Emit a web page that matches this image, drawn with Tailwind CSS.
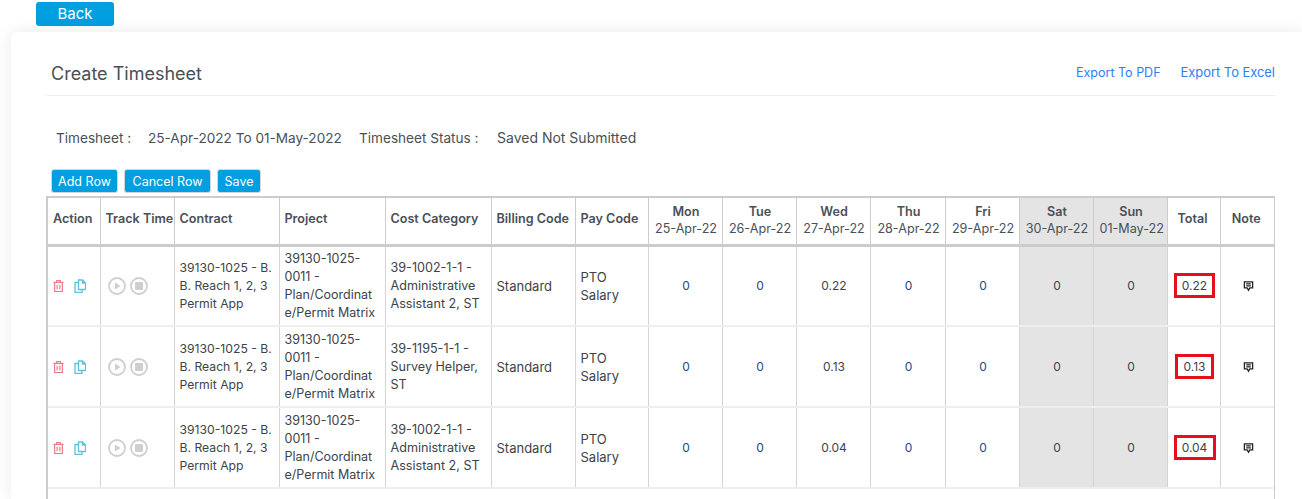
<!DOCTYPE html>
<html lang="en">
<head>
    <meta charset="UTF-8">
    <title>Create Timesheet</title>
    <script src="https://cdn.jsdelivr.net/npm/@tailwindcss/browser@4"></script>
</head>
<body class="bg-white h-[499px] overflow-hidden font-['Inter','Noto_Sans',sans-serif] text-[#495057]">
    <div class="pl-9 pt-[2px] h-[32px]">
        <button class="block w-[78px] h-[24px] bg-[#009fdf] rounded-[3px] text-white text-[15px]">Back</button>
    </div>

    <div class="ml-[11px] h-[467px] bg-white rounded-tl-md shadow-[0_0_16px_rgba(0,0,0,0.09)] pl-[35px] pr-[27px]">
        <!-- title -->
        <div class="h-[64px] pl-[5px] flex items-center justify-between border-b border-[#eeeeee] pt-[18px]">
            <h1 class="text-[18px] text-[#495057] pt-[2px]">Create Timesheet</h1>
            <div class="flex items-baseline gap-[20px] pt-[1px] text-[#2f7df6]">
                <a class="text-[12.5px]">Export To PDF</a>
                <a class="text-[12.9px]">Export To Excel</a>
            </div>
        </div>

        <div class="h-[73px] pl-[10px] pt-[34px] flex text-[13.6px] leading-[16px]">
            <span class="w-[92px]">Timesheet :</span>
            <span class="w-[211px]">25-Apr-2022 To 01-May-2022</span>
            <span class="w-[138px]">Timesheet Status :</span>
            <span class="text-[14px]">Saved Not Submitted</span>
        </div>

        <!-- buttons -->
        <div class="flex gap-[6px] pl-[5px] h-[27px] text-white text-[12.5px]">
            <button class="w-[67px] h-[24px] pt-[3px] bg-[#009fdf] rounded-[3px] border border-[#cfd8dc]">Add Row</button>
            <button class="w-[87px] h-[24px] pt-[3px] bg-[#009fdf] rounded-[3px] border border-[#cfd8dc]">Cancel Row</button>
            <button class="w-[44px] h-[24px] pt-[3px] bg-[#009fdf] rounded-[3px] border border-[#cfd8dc]">Save</button>
        </div>

        <div class="h-[303px] w-[1229px] border-l-2 border-r border-[#cccccc]">
            <table class="table-fixed border-collapse w-[1226px] text-xs text-[#3d4349]">
                <colgroup>
                    <col class="w-[52px]"><col class="w-[74px]"><col class="w-[105px]"><col class="w-[106px]"><col class="w-[106px]"><col class="w-[84px]"><col class="w-[73px]"><col class="w-[74px]"><col class="w-[74px]"><col class="w-[74px]"><col class="w-[75px]"><col class="w-[74px]"><col class="w-[74px]"><col class="w-[74px]"><col class="w-[53px]"><col>
                </colgroup>
                <thead>
                    <tr class="h-[48px] text-[12.6px] text-[#495057] border-t-2 border-b-[3px] border-[#cccccc] text-left [&>th]:border-r [&>th]:border-[#cccccc] [&>th]:px-[5px] [&>th]:pb-[2px] [&>th]:font-semibold [&>th.text-center]:pl-[6px] [&>th.text-center]:pr-[4px]">
                        <th>Action</th>
                        <th class="whitespace-nowrap">Track Time</th>
                        <th>Contract</th>
                        <th>Project</th>
                        <th class="whitespace-nowrap">Cost Category</th>
                        <th class="whitespace-nowrap">Billing Code</th>
                        <th class="whitespace-nowrap">Pay Code</th>
                        <th class="text-center leading-[17px]">Mon<div class="font-normal whitespace-nowrap">25-Apr-22</div></th>
                        <th class="text-center leading-[17px]">Tue<div class="font-normal whitespace-nowrap">26-Apr-22</div></th>
                        <th class="text-center leading-[17px]">Wed<div class="font-normal whitespace-nowrap">27-Apr-22</div></th>
                        <th class="text-center leading-[17px]">Thu<div class="font-normal whitespace-nowrap">28-Apr-22</div></th>
                        <th class="text-center leading-[17px]">Fri<div class="font-normal whitespace-nowrap">29-Apr-22</div></th>
                        <th class="text-center leading-[17px] bg-[#e4e4e4]">Sat<div class="font-normal whitespace-nowrap">30-Apr-22</div></th>
                        <th class="text-center leading-[17px] bg-[#e4e4e4]">Sun<div class="font-normal whitespace-nowrap">01-May-22</div></th>
                        <th class="text-center !pl-[3px] !pr-[5px]">Total</th>
                        <th class="text-center !pl-[3px] !pr-[5px] !border-r-0">Note</th>
                    </tr>
                </thead>
                <tbody class="leading-[18px] [&>tr]:h-[81px] [&>tr]:border-b-2 [&>tr]:border-[#eeeeee] [&_td]:border-r [&_td]:border-[#d4d4d4] [&_td]:px-[5px] [&_td.text-center]:pl-[6px] [&_td.text-center]:pr-[4px]">
                    <tr>
                        <td>
                            <div class="flex items-center gap-[10px]">
                                <svg class="w-[11px] h-[14px] text-[#ee7a88]" viewBox="0 0 12 14" fill="none" stroke="currentColor" stroke-width="1.3"><path d="M0.5 3h11M4 3V1h4v2M1.8 3v10h8.4V3M4.5 5.5v5M7.5 5.5v5"/></svg>
                                <svg class="w-[12px] h-[14px] text-[#5cc3dc]" viewBox="0 0 12 14" fill="none" stroke="currentColor" stroke-width="1.3"><path d="M4.5 10.5V1h4l3 3v6.5zM8.5 1v3h3"/><path d="M4.5 3.5H1v10h7v-3"/></svg>
                            </div>
                        </td>
                        <td>
                            <div class="flex items-center gap-[4px] pl-[2px]">
                                <svg class="w-[18px] h-[18px] text-[#cfcfcf]" viewBox="0 0 18 18"><circle cx="9" cy="9" r="8" fill="none" stroke="currentColor" stroke-width="1.8"/><path d="M7 5.5 12.5 9 7 12.5z" fill="currentColor"/></svg>
                                <svg class="w-[18px] h-[18px] text-[#cfcfcf]" viewBox="0 0 18 18"><circle cx="9" cy="9" r="8" fill="none" stroke="currentColor" stroke-width="1.8"/><rect x="5" y="5" width="8" height="8" rx="1" fill="currentColor"/></svg>
                            </div>
                        </td>
                        <td class="text-[12.2px] whitespace-nowrap">39130-1025 - B.<br>B. Reach 1, 2, 3<br>Permit App</td>
                        <td class="text-[12.5px] whitespace-nowrap">39130-1025-<br>0011 -<br>Plan/Coordinat<br>e/Permit Matrix</td>
                        <td class="text-[12.6px] whitespace-nowrap">39-1002-1-1 -<br>Administrative<br>Assistant 2, ST</td>
                        <td class="text-[13px]">Standard</td>
                        <td class="text-[13px]">PTO<br>Salary</td>
                        <td class="text-center text-[#24477f]">0</td>
                        <td class="text-center text-[#24477f]">0</td>
                        <td class="text-center">0.22</td>
                        <td class="text-center text-[#24477f]">0</td>
                        <td class="text-center text-[#24477f]">0</td>
                        <td class="text-center bg-[#e4e4e4]">0</td>
                        <td class="text-center bg-[#e4e4e4]">0</td>
                        <td class="text-center"><span class="inline-block w-[41px] h-[25px] leading-[19px] border-[3px] border-[#e60f1e]">0.22</span></td>
                        <td class="text-center !border-r-0"><svg class="w-[11px] h-[11px] mx-auto mt-[1px] text-[#222222]" viewBox="0 0 12 12" fill="none" stroke="currentColor" stroke-width="1.4"><path d="M1.5 1h9v6.5H7.5L6 10 4.5 7.5h-3zM3.5 3.2h5M3.5 5.2h5"/></svg></td>
                    </tr>
                    <tr>
                        <td>
                            <div class="flex items-center gap-[10px]">
                                <svg class="w-[11px] h-[14px] text-[#ee7a88]" viewBox="0 0 12 14" fill="none" stroke="currentColor" stroke-width="1.3"><path d="M0.5 3h11M4 3V1h4v2M1.8 3v10h8.4V3M4.5 5.5v5M7.5 5.5v5"/></svg>
                                <svg class="w-[12px] h-[14px] text-[#5cc3dc]" viewBox="0 0 12 14" fill="none" stroke="currentColor" stroke-width="1.3"><path d="M4.5 10.5V1h4l3 3v6.5zM8.5 1v3h3"/><path d="M4.5 3.5H1v10h7v-3"/></svg>
                            </div>
                        </td>
                        <td>
                            <div class="flex items-center gap-[4px] pl-[2px]">
                                <svg class="w-[18px] h-[18px] text-[#cfcfcf]" viewBox="0 0 18 18"><circle cx="9" cy="9" r="8" fill="none" stroke="currentColor" stroke-width="1.8"/><path d="M7 5.5 12.5 9 7 12.5z" fill="currentColor"/></svg>
                                <svg class="w-[18px] h-[18px] text-[#cfcfcf]" viewBox="0 0 18 18"><circle cx="9" cy="9" r="8" fill="none" stroke="currentColor" stroke-width="1.8"/><rect x="5" y="5" width="8" height="8" rx="1" fill="currentColor"/></svg>
                            </div>
                        </td>
                        <td class="text-[12.2px] whitespace-nowrap">39130-1025 - B.<br>B. Reach 1, 2, 3<br>Permit App</td>
                        <td class="text-[12.5px] whitespace-nowrap">39130-1025-<br>0011 -<br>Plan/Coordinat<br>e/Permit Matrix</td>
                        <td class="text-[12.6px] whitespace-nowrap">39-1195-1-1 -<br>Survey Helper,<br>ST</td>
                        <td class="text-[13px]">Standard</td>
                        <td class="text-[13px]">PTO<br>Salary</td>
                        <td class="text-center text-[#24477f]">0</td>
                        <td class="text-center text-[#24477f]">0</td>
                        <td class="text-center">0.13</td>
                        <td class="text-center text-[#24477f]">0</td>
                        <td class="text-center text-[#24477f]">0</td>
                        <td class="text-center bg-[#e4e4e4]">0</td>
                        <td class="text-center bg-[#e4e4e4]">0</td>
                        <td class="text-center"><span class="inline-block w-[39px] h-[25px] leading-[19px] border-[3px] border-[#e60f1e]">0.13</span></td>
                        <td class="text-center !border-r-0"><svg class="w-[11px] h-[11px] mx-auto mt-[1px] text-[#222222]" viewBox="0 0 12 12" fill="none" stroke="currentColor" stroke-width="1.4"><path d="M1.5 1h9v6.5H7.5L6 10 4.5 7.5h-3zM3.5 3.2h5M3.5 5.2h5"/></svg></td>
                    </tr>
                    <tr>
                        <td>
                            <div class="flex items-center gap-[10px]">
                                <svg class="w-[11px] h-[14px] text-[#ee7a88]" viewBox="0 0 12 14" fill="none" stroke="currentColor" stroke-width="1.3"><path d="M0.5 3h11M4 3V1h4v2M1.8 3v10h8.4V3M4.5 5.5v5M7.5 5.5v5"/></svg>
                                <svg class="w-[12px] h-[14px] text-[#5cc3dc]" viewBox="0 0 12 14" fill="none" stroke="currentColor" stroke-width="1.3"><path d="M4.5 10.5V1h4l3 3v6.5zM8.5 1v3h3"/><path d="M4.5 3.5H1v10h7v-3"/></svg>
                            </div>
                        </td>
                        <td>
                            <div class="flex items-center gap-[4px] pl-[2px]">
                                <svg class="w-[18px] h-[18px] text-[#cfcfcf]" viewBox="0 0 18 18"><circle cx="9" cy="9" r="8" fill="none" stroke="currentColor" stroke-width="1.8"/><path d="M7 5.5 12.5 9 7 12.5z" fill="currentColor"/></svg>
                                <svg class="w-[18px] h-[18px] text-[#cfcfcf]" viewBox="0 0 18 18"><circle cx="9" cy="9" r="8" fill="none" stroke="currentColor" stroke-width="1.8"/><rect x="5" y="5" width="8" height="8" rx="1" fill="currentColor"/></svg>
                            </div>
                        </td>
                        <td class="text-[12.2px] whitespace-nowrap">39130-1025 - B.<br>B. Reach 1, 2, 3<br>Permit App</td>
                        <td class="text-[12.5px] whitespace-nowrap">39130-1025-<br>0011 -<br>Plan/Coordinat<br>e/Permit Matrix</td>
                        <td class="text-[12.6px] whitespace-nowrap">39-1002-1-1 -<br>Administrative<br>Assistant 2, ST</td>
                        <td class="text-[13px]">Standard</td>
                        <td class="text-[13px]">PTO<br>Salary</td>
                        <td class="text-center text-[#24477f]">0</td>
                        <td class="text-center text-[#24477f]">0</td>
                        <td class="text-center">0.04</td>
                        <td class="text-center text-[#24477f]">0</td>
                        <td class="text-center text-[#24477f]">0</td>
                        <td class="text-center bg-[#e4e4e4]">0</td>
                        <td class="text-center bg-[#e4e4e4]">0</td>
                        <td class="text-center"><span class="inline-block w-[42px] h-[25px] leading-[19px] border-[3px] border-[#e60f1e]">0.04</span></td>
                        <td class="text-center !border-r-0"><svg class="w-[11px] h-[11px] mx-auto mt-[1px] text-[#222222]" viewBox="0 0 12 12" fill="none" stroke="currentColor" stroke-width="1.4"><path d="M1.5 1h9v6.5H7.5L6 10 4.5 7.5h-3zM3.5 3.2h5M3.5 5.2h5"/></svg></td>
                    </tr>
                </tbody>
            </table>
        </div>
    </div>
</body>
</html>
